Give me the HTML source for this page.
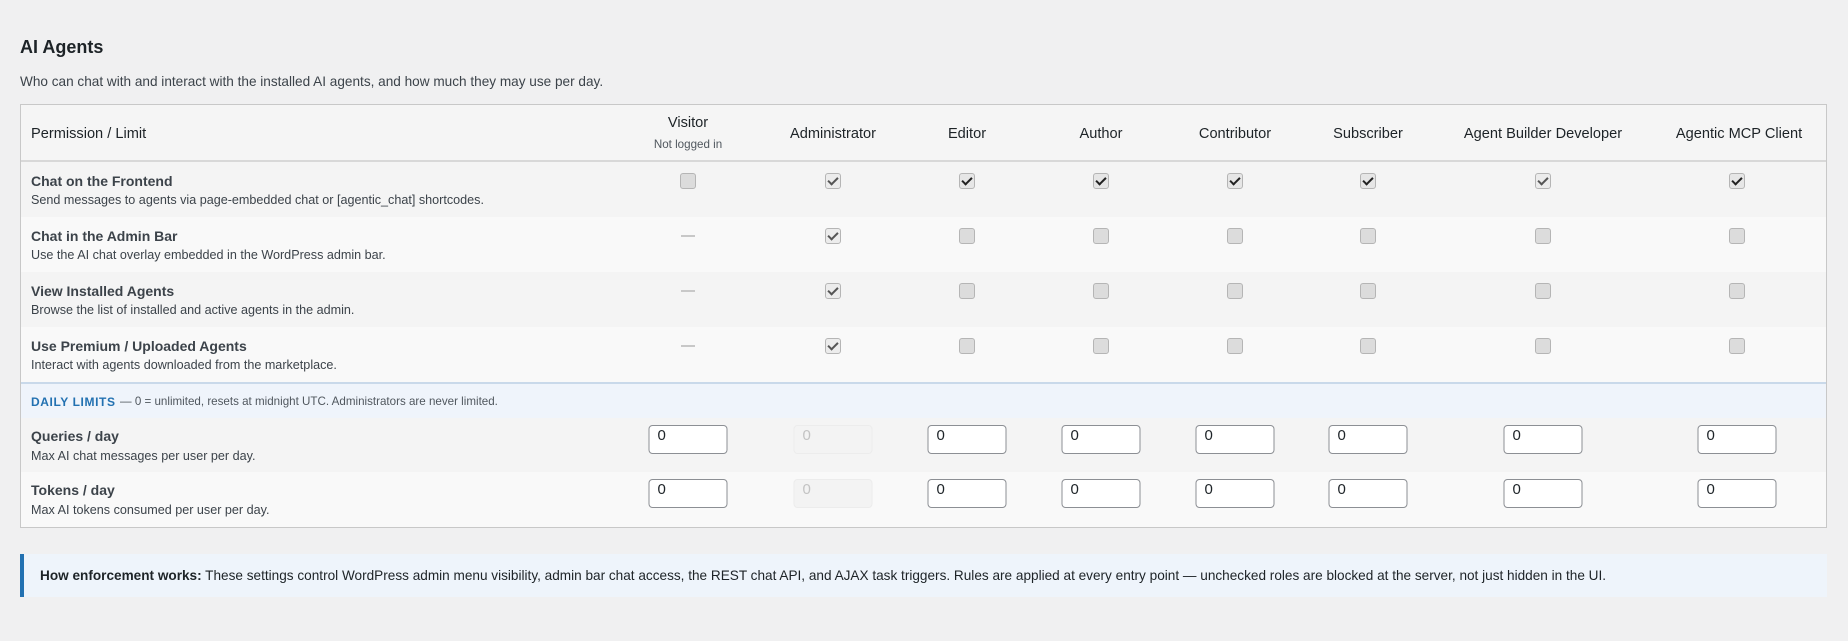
<!DOCTYPE html>
<html><head><meta charset="utf-8"><style>
*{box-sizing:border-box;margin:0;padding:0}
body{width:1848px;height:641px;background:#f0f0f1;font-family:"Liberation Sans",Arial,sans-serif;color:#3c434a;position:relative;overflow:hidden}
.a{position:absolute;white-space:nowrap}
h1{position:absolute;left:20px;top:37px;font-size:18px;font-weight:bold;color:#1d2327}
.lead{left:20px;top:74px;font-size:13.6px;color:#3c434a}
.tbl{position:absolute;left:20px;top:104px;width:1807px;height:424px;border:1px solid #c8c8c8;background:#f6f6f6}
.hdr{position:absolute;left:0;top:0;width:100%;height:57px;background:#f5f5f5;border-bottom:2px solid #d8d8d8}
.row{position:absolute;left:0;width:100%;height:55px}
.t{font-size:14px;font-weight:bold;color:#3c434a;left:10px}
.d{font-size:12.6px;color:#3c434a;left:10px}
.h{font-size:14.6px;color:#1d2327;transform:translateX(-50%);top:0}
.cb{position:absolute;width:16px;height:16px;border-radius:3px;border:1px solid #b5b5b5;background:#dcdcdc;transform:translate(-50%,-50%)}
.cb.on{background:#ececec}
.cb.on::after{content:"";position:absolute;left:4px;top:1px;width:4px;height:8px;border:solid #555;border-width:0 2.5px 2.5px 0;transform:rotate(45deg)}
.cb.dk::after{border-color:#222}
.cb.dk{background:#e6e6e6}
.dash{position:absolute;width:14px;height:2px;background:#c8c8c8;transform:translateX(-50%)}
.in{position:absolute;width:79px;height:29px;border:1px solid #8c8f94;border-radius:4px;background:#fff;font-size:15px;color:#1d2327;padding:1px 0 0 8px;transform:translateX(-50%)}
.in.dis{border-color:#ececec;background:#f3f3f3;color:#c3c3c3}
</style></head><body>
<h1>AI Agents</h1>
<div class="a lead">Who can chat with and interact with the installed AI agents, and how much they may use per day.</div>
<div class="tbl">
 <div class="hdr">
  <div class="a" style="left:10px;top:21px;font-size:14.6px;color:#1d2327">Permission / Limit</div>
  <div class="a h" style="left:667px;top:10px">Visitor</div>
  <div class="a h" style="left:667px;top:33px;font-size:11.6px;color:#50575e">Not logged in</div>
  <div class="a h" style="left:812px;top:21px">Administrator</div>
  <div class="a h" style="left:946px;top:21px">Editor</div>
  <div class="a h" style="left:1080px;top:21px">Author</div>
  <div class="a h" style="left:1214px;top:21px">Contributor</div>
  <div class="a h" style="left:1347px;top:21px">Subscriber</div>
  <div class="a h" style="left:1522px;top:21px">Agent Builder Developer</div>
  <div class="a h" style="left:1718px;top:21px">Agentic MCP Client</div>
 </div>
 <div class="row" style="top:57px;background:#f4f4f4">
  <div class="a t" style="top:11px">Chat on the Frontend</div>
  <div class="a d" style="top:31px">Send messages to agents via page-embedded chat or [agentic_chat] shortcodes.</div>
  <div class="cb" style="left:667px;top:19px"></div>
  <div class="cb on" style="left:812px;top:19px"></div>
  <div class="cb on dk" style="left:946px;top:19px"></div>
  <div class="cb on dk" style="left:1080px;top:19px"></div>
  <div class="cb on dk" style="left:1214px;top:19px"></div>
  <div class="cb on dk" style="left:1347px;top:19px"></div>
  <div class="cb on" style="left:1522px;top:19px"></div>
  <div class="cb on dk" style="left:1716px;top:19px"></div>
 </div>
 <div class="row" style="top:112px;background:#f9f9f9">
  <div class="a t" style="top:11px">Chat in the Admin Bar</div>
  <div class="a d" style="top:31px">Use the AI chat overlay embedded in the WordPress admin bar.</div>
  <div class="dash" style="left:667px;top:18px"></div>
  <div class="cb on" style="left:812px;top:19px"></div>
  <div class="cb" style="left:946px;top:19px"></div><div class="cb" style="left:1080px;top:19px"></div><div class="cb" style="left:1214px;top:19px"></div><div class="cb" style="left:1347px;top:19px"></div><div class="cb" style="left:1522px;top:19px"></div><div class="cb" style="left:1716px;top:19px"></div>
 </div>
 <div class="row" style="top:167px;background:#f4f4f4">
  <div class="a t" style="top:11px">View Installed Agents</div>
  <div class="a d" style="top:31px">Browse the list of installed and active agents in the admin.</div>
  <div class="dash" style="left:667px;top:18px"></div>
  <div class="cb on" style="left:812px;top:19px"></div>
  <div class="cb" style="left:946px;top:19px"></div><div class="cb" style="left:1080px;top:19px"></div><div class="cb" style="left:1214px;top:19px"></div><div class="cb" style="left:1347px;top:19px"></div><div class="cb" style="left:1522px;top:19px"></div><div class="cb" style="left:1716px;top:19px"></div>
 </div>
 <div class="row" style="top:222px;background:#f9f9f9">
  <div class="a t" style="top:11px">Use Premium / Uploaded Agents</div>
  <div class="a d" style="top:31px">Interact with agents downloaded from the marketplace.</div>
  <div class="dash" style="left:667px;top:18px"></div>
  <div class="cb on" style="left:812px;top:19px"></div>
  <div class="cb" style="left:946px;top:19px"></div><div class="cb" style="left:1080px;top:19px"></div><div class="cb" style="left:1214px;top:19px"></div><div class="cb" style="left:1347px;top:19px"></div><div class="cb" style="left:1522px;top:19px"></div><div class="cb" style="left:1716px;top:19px"></div>
 </div>
 <div class="row" style="top:277px;height:36px;background:#eff4fb;border-top:2px solid #c9d9ea">
  <div class="a" style="left:10px;top:11px;font-size:12px;font-weight:bold;color:#2271b1;letter-spacing:0.6px">DAILY LIMITS</div>
  <div class="a" style="left:99px;top:11px;font-size:11.6px;color:#50575e">— 0 = unlimited, resets at midnight UTC. Administrators are never limited.</div>
 </div>
 <div class="row" style="top:313px;height:54px;background:#f4f4f4">
  <div class="a t" style="top:10px">Queries / day</div>
  <div class="a d" style="top:31px">Max AI chat messages per user per day.</div>
  <div class="in" style="left:667px;top:7px">0</div>
  <div class="in dis" style="left:812px;top:7px">0</div>
  <div class="in" style="left:946px;top:7px">0</div><div class="in" style="left:1080px;top:7px">0</div><div class="in" style="left:1214px;top:7px">0</div><div class="in" style="left:1347px;top:7px">0</div><div class="in" style="left:1522px;top:7px">0</div><div class="in" style="left:1716px;top:7px">0</div>
 </div>
 <div class="row" style="top:367px;height:55px;background:#f9f9f9">
  <div class="a t" style="top:10px">Tokens / day</div>
  <div class="a d" style="top:31px">Max AI tokens consumed per user per day.</div>
  <div class="in" style="left:667px;top:7px">0</div>
  <div class="in dis" style="left:812px;top:7px">0</div>
  <div class="in" style="left:946px;top:7px">0</div><div class="in" style="left:1080px;top:7px">0</div><div class="in" style="left:1214px;top:7px">0</div><div class="in" style="left:1347px;top:7px">0</div><div class="in" style="left:1522px;top:7px">0</div><div class="in" style="left:1716px;top:7px">0</div>
 </div>
</div>
<div style="position:absolute;left:20px;top:554px;width:1807px;height:43px;background:#eef4fb;border-left:4px solid #2271b1"></div>
<div class="a" style="left:40px;top:568px;font-size:13.6px;color:#1d2327"><b>How enforcement works:</b> These settings control WordPress admin menu visibility, admin bar chat access, the REST chat API, and AJAX task triggers. Rules are applied at every entry point — unchecked roles are blocked at the server, not just hidden in the UI.</div>
</body></html>
